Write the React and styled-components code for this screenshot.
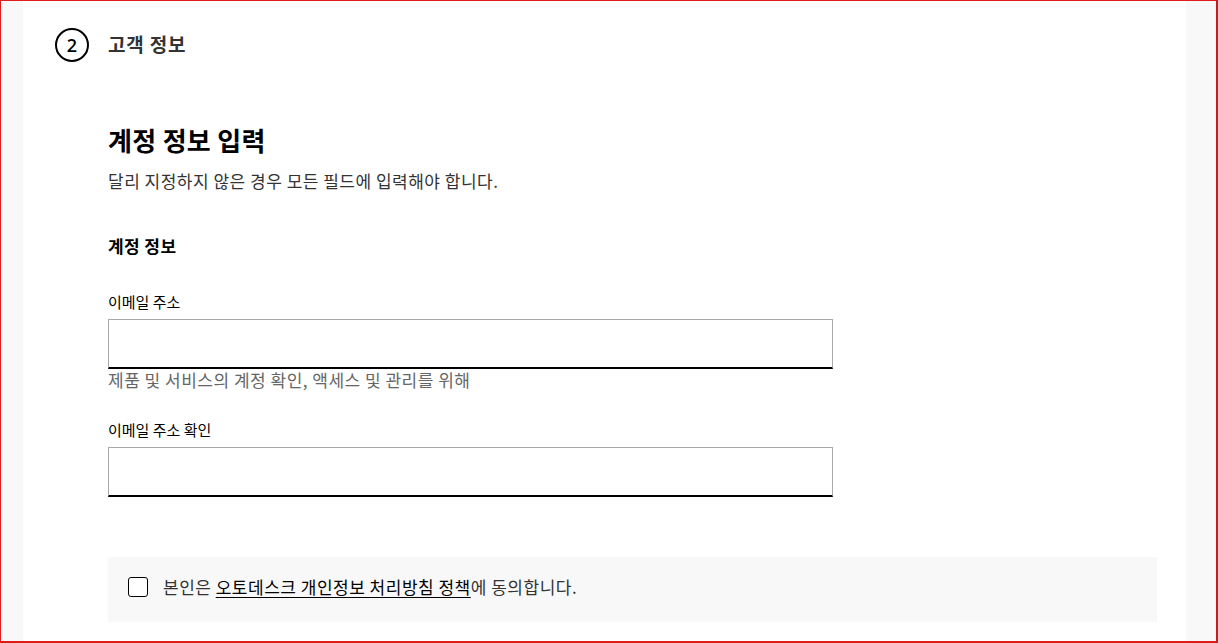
import React from "react";
import styled, { createGlobalStyle } from "styled-components";

const Global = createGlobalStyle`
  html, body { margin: 0; padding: 0; }
  body {
    font-family: "Noto Sans CJK KR", "Noto Sans", sans-serif;
    background: #ffffff;
  }
  * { box-sizing: border-box; }
`;

const Frame = styled.div`
  width: 1218px;
  height: 643px;
  border-top: 1px solid #e01b1b;
  border-left: 1px solid #e01b1b;
  border-right: 2px solid #c41d1d;
  border-bottom: 2px solid #e01b1b;
  background: #f8f8f8;
  display: flex;
  padding: 0 30px 0 22px;
  overflow: hidden;
`;

const Card = styled.main`
  flex: 1;
  background: #ffffff;
  padding: 27px 29px 0 32px;
  display: flex;
  flex-direction: column;
`;

const StepHeader = styled.div`
  display: flex;
  align-items: center;
  gap: 19px;
  height: 34px;
`;

const StepNumber = styled.span`
  width: 34px;
  height: 34px;
  border: 2px solid #000;
  border-radius: 50%;
  display: flex;
  align-items: center;
  justify-content: center;
  font-family: "Open Sans", "Noto Sans", sans-serif;
  font-size: 18px;
  font-weight: 600;
  color: #000;
  line-height: 1;
`;

const StepTitle = styled.h2`
  margin: 0 0 2px;
  font-size: 19px;
  letter-spacing: 0.8px;
  font-weight: 700;
  color: #333;
  line-height: 24px;
`;

const Content = styled.section`
  padding-left: 53px;
  display: flex;
  flex-direction: column;
`;

const Heading = styled.h1`
  margin: 62px 0 0;
  font-size: 26px;
  letter-spacing: 0.3px;
  font-weight: 700;
  line-height: 32px;
  color: #000;
`;

const Subtitle = styled.p`
  margin: 13px 0 0;
  font-size: 17px;
  letter-spacing: 0.5px;
  line-height: 24px;
  color: #333;
`;

const SectionTitle = styled.h3`
  margin: 41px 0 0;
  font-size: 17px;
  letter-spacing: 0.4px;
  font-weight: 700;
  line-height: 24px;
  color: #000;
`;

const Field = styled.div`
  display: flex;
  flex-direction: column;
  margin-top: ${(p) => p.$top}px;
`;

const Label = styled.label`
  font-size: 15px;
  line-height: 20px;
  color: #000;
  margin-bottom: 7px;
`;

const Input = styled.input`
  width: 725px;
  height: 50px;
  border: 1px solid #a9a9a9;
  border-bottom: 2px solid #000;
  border-radius: 0;
  background: #fff;
  font: inherit;
  padding: 0 12px;
  outline: none;
`;

const Helper = styled.span`
  font-size: 17px;
  letter-spacing: 0.5px;
  line-height: 22px;
  color: #666;
`;

const Consent = styled.div`
  margin-top: 60px;
  height: 65px;
  background: #f8f8f8;
  display: flex;
  align-items: center;
  padding: 0 0 6px 20px;
  gap: 15px;
`;

const Checkbox = styled.span`
  width: 20px;
  height: 20px;
  border: 1.5px solid #000;
  border-radius: 3px;
  background: #fff;
  flex-shrink: 0;
`;

const ConsentText = styled.span`
  font-size: 17px;
  letter-spacing: 0.5px;
  line-height: 24px;
  color: #333;
`;

const PolicyLink = styled.a`
  color: #000;
  text-decoration: underline;
  text-underline-offset: 3px;
`;

export default function App() {
  return (
    <>
      <Global />
      <Frame>
        <Card>
          <StepHeader>
            <StepNumber>2</StepNumber>
            <StepTitle>고객 정보</StepTitle>
          </StepHeader>
          <Content>
            <Heading>계정 정보 입력</Heading>
            <Subtitle>달리 지정하지 않은 경우 모든 필드에 입력해야 합니다.</Subtitle>
            <SectionTitle>계정 정보</SectionTitle>
            <Field $top={34}>
              <Label>이메일 주소</Label>
              <Input type="text" />
              <Helper>제품 및 서비스의 계정 확인, 액세스 및 관리를 위해</Helper>
            </Field>
            <Field $top={29}>
              <Label>이메일 주소 확인</Label>
              <Input type="text" />
            </Field>
            <Consent>
              <Checkbox />
              <ConsentText>
                본인은 <PolicyLink href="#">오토데스크 개인정보 처리방침 정책</PolicyLink>에 동의합니다.
              </ConsentText>
            </Consent>
          </Content>
        </Card>
      </Frame>
    </>
  );
}
